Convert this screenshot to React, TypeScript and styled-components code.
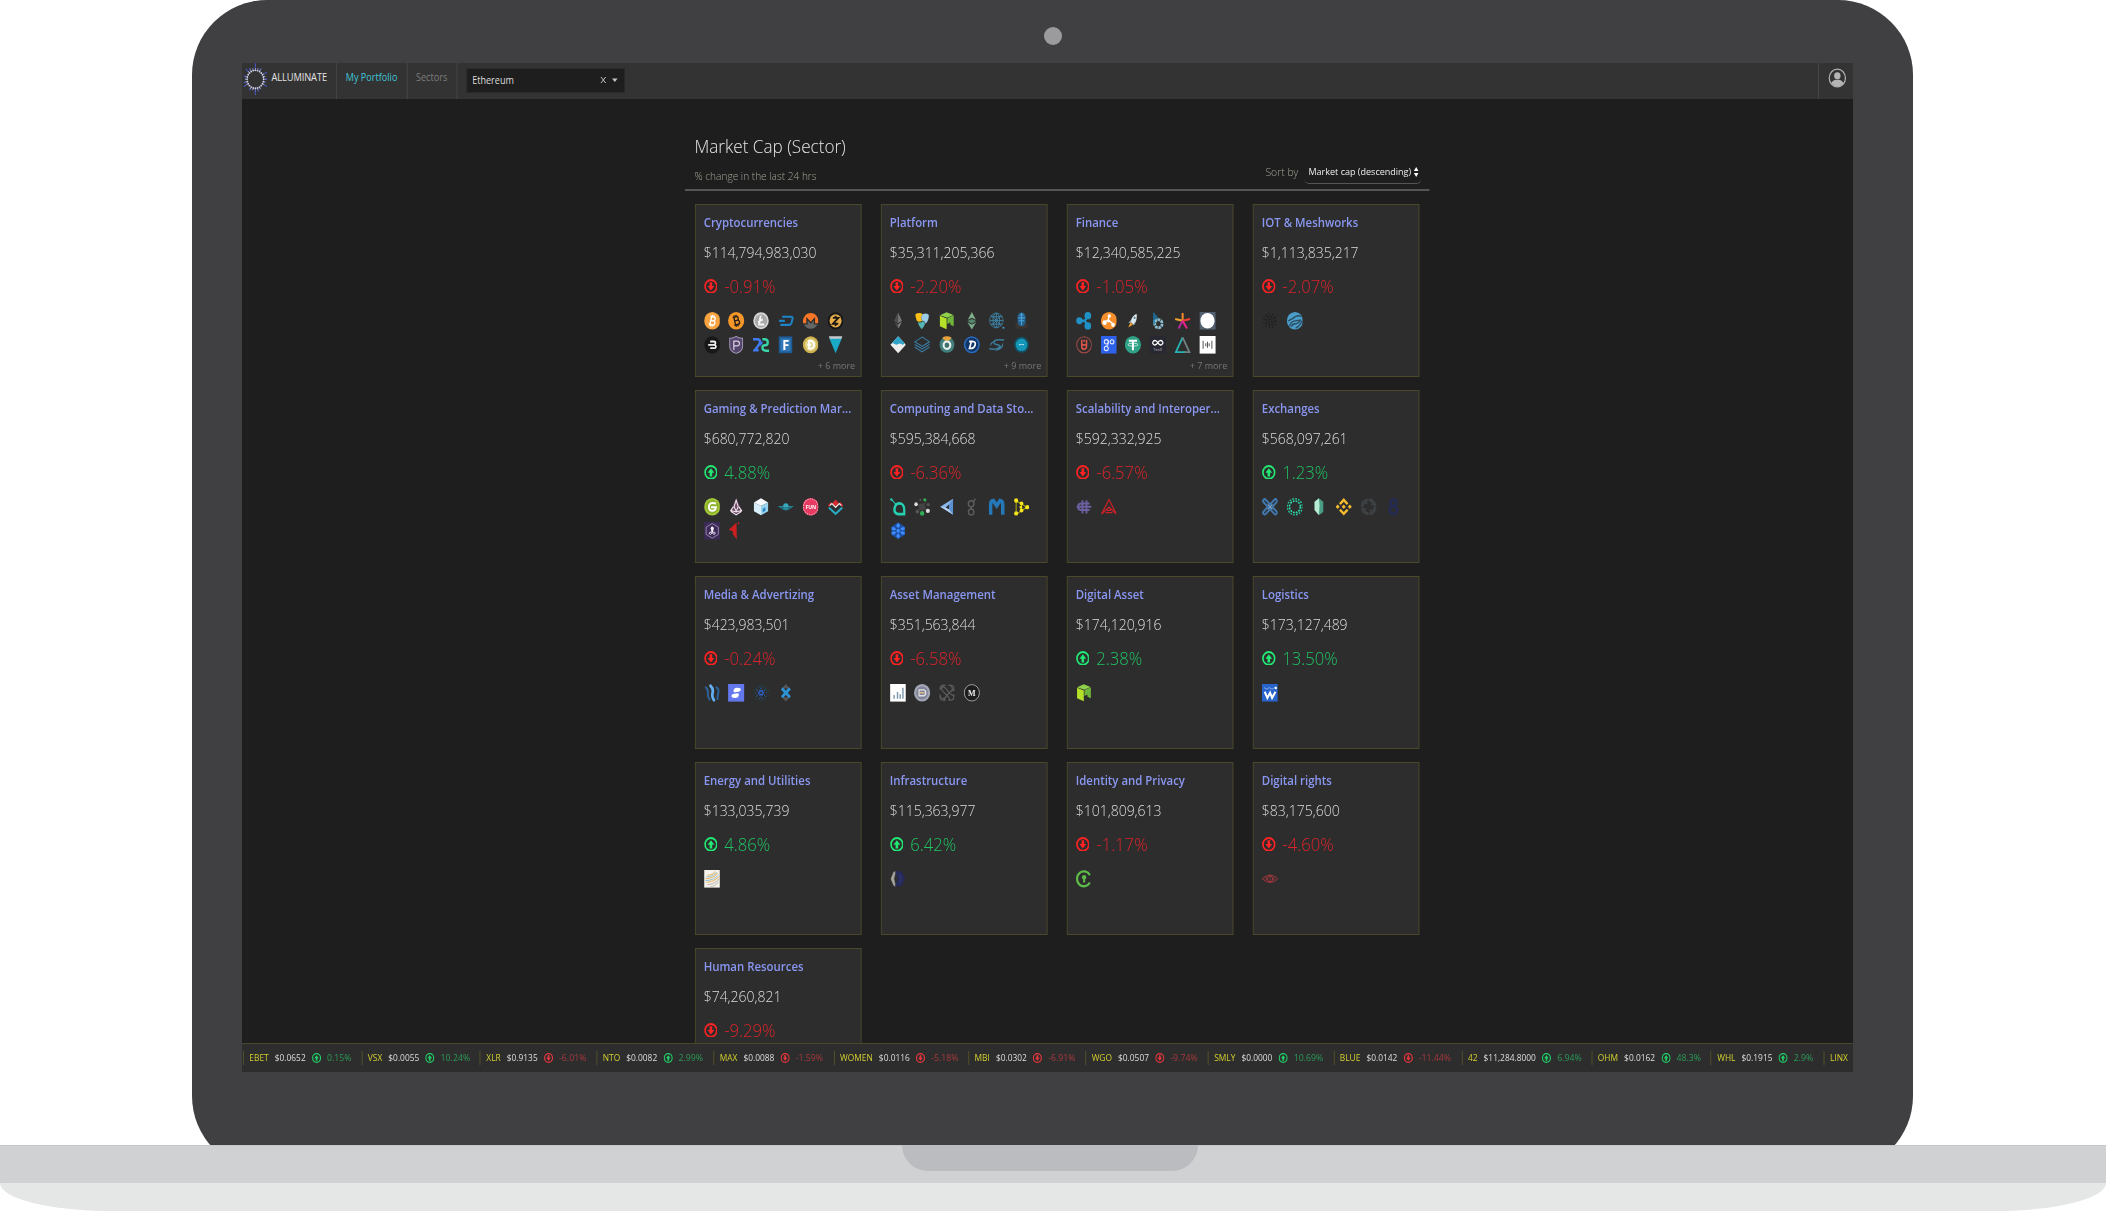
import React from "react";
import styled, { createGlobalStyle } from "styled-components";

const GlobalStyle = createGlobalStyle`
  *, *::before, *::after { box-sizing: border-box; }
  html, body { margin: 0; padding: 0; background: #fff; }
  body { width: 2106px; height: 1211px; overflow: hidden; font-family: "Open Sans", "Noto Sans", sans-serif; }
`;

/* ---------- laptop ---------- */

const Laptop = styled.div`
  width: 2106px;
  height: 1211px;
  display: flex;
  flex-direction: column;
  align-items: center;
  overflow: hidden;
  background: #fff;
`;
const LidClip = styled.div`
  width: 1721px;
  height: 1145px;
  margin-right: 1px;
  overflow: hidden;
  flex: none;
`;
const Lid = styled.div`
  height: 1171px;
  border-radius: 75px;
  background: #404042;
  display: flex;
  flex-direction: column;
  align-items: flex-start;
  padding-left: 50px;
`;
const CameraBar = styled.div`
  height: 63px;
  width: 1622px;
  padding-top: 26.5px;
  display: flex;
  justify-content: center;
`;
const Camera = styled.div`
  width: 18px;
  height: 18px;
  border-radius: 50%;
  background: #9b9b9d;
`;
const Base = styled.div`
  width: 100%;
  height: 38px;
  flex: none;
  background: #d0d1d3;
  border-top: 1px solid #c6c7c9;
  display: flex;
  justify-content: center;
`;
const Notch = styled.div`
  width: 296px;
  height: 26px;
  margin-left: -6px;
  margin-top: -1px;
  border-radius: 0 0 26px 26px;
  background: #bbbcbf;
`;
const Foot = styled.div`
  width: 100%;
  height: 28px;
  flex: none;
  background: #e5e7e6;
  border-radius: 0 0 110px 110px / 0 0 28px 28px;
`;

/* The app is laid out 1750px wide and narrowed to the width of the display. */
const Display = styled.div`
  width: 1611px;
  height: 1009px;
  overflow: hidden;
  background: #1e1e1e;
`;
const Page = styled.div`
  width: 1750px;
  height: 1009px;
  transform: scaleX(0.92057);
  transform-origin: 0 0;
  display: flex;
  flex-direction: column;
  overflow: hidden;
`;

/* ---------- navigation ---------- */

const Nav = styled.nav`
  height: 36px;
  flex: none;
  background: #333;
  display: flex;
  align-items: stretch;
`;
const Brand = styled.div`
  width: 102px;
  padding-left: 0.5px;
  display: flex;
  align-items: flex-start;
`;
const BrandName = styled.span`
  font-size: 10.1px;
  line-height: 28px;
  letter-spacing: -0.1px;
  color: #e4e4e4;
  margin-left: 4.5px;
`;
const NavItem = styled.a<{ $w: number; $active?: boolean }>`
  width: ${(p) => p.$w}px;
  border-left: 1px solid #474747;
  text-align: center;
  font-size: 9.9px;
  line-height: 28px;
  color: ${(p) => (p.$active ? "#3fc6d8" : "#7d7d7d")};
`;
const SearchCell = styled.div`
  border-left: 1px solid #474747;
  padding: 5px 0 0 10px;
  flex: 1;
`;
const SearchBox = styled.div`
  width: 172px;
  height: 24.5px;
  background: #1e1e1e;
  border: 1px solid #2a2a2a;
  display: flex;
  align-items: flex-start;
  padding: 0.5px 5px 0 5.5px;
  color: #dcdcdc;
  font-size: 9.9px;
`;
const SearchValue = styled.span`
  flex: 1;
  line-height: 20px;
`;
const SearchIcons = styled.svg`
  width: 22px;
  height: 10px;
  margin-top: 5.5px;
`;
const Profile = styled.div`
  width: 38px;
  border-left: 1px solid #474747;
  display: flex;
  padding: 4.5px 0 0 10px;
`;

/* ---------- heading ---------- */

const Content = styled.main`
  height: 944px;
  flex: none;
  overflow: hidden;
  display: flex;
  flex-direction: column;
  padding-left: 481px;
`;
const Heading = styled.header`
  width: 809px;
  height: 92px;
  flex: none;
  border-bottom: 2px solid #555;
  padding: 0 9.5px 0 10.5px;
  display: flex;
  justify-content: space-between;
`;
const Titles = styled.div`
  display: flex;
  flex-direction: column;
`;
const Title = styled.h1`
  margin: 33px 0 0;
  font-size: 18.6px;
  line-height: 28px;
  font-weight: 300;
  color: #e6e6e6;
`;
const Subtitle = styled.span`
  margin-top: 6px;
  font-size: 11px;
  line-height: 20px;
  font-weight: 300;
  color: #a3a396;
`;
const Sort = styled.div`
  display: flex;
  margin-top: 62px;
  height: 24px;
`;
const SortLabel = styled.span`
  font-size: 11.3px;
  line-height: 22px;
  font-weight: 300;
  color: #a3a396;
  margin-right: 6px;
`;
const SortSelect = styled.span`
  width: 127px;
  height: 23px;
  border-bottom: 1.5px solid #555;
  border-radius: 5px;
  font-size: 9.8px;
  line-height: 21px;
  color: #ececec;
  padding-left: 5px;
  display: flex;
  align-items: flex-start;
  white-space: nowrap;
`;
const SortArrows = styled.svg`
  width: 5px;
  height: 10px;
  margin: 5.5px 0 0 2.5px;
`;

/* ---------- cards ---------- */

const Grid = styled.section`
  margin: 13.3px 0 0 10.5px;
  display: grid;
  grid-template-columns: repeat(4, 181.6px);
  grid-auto-rows: 172.4px;
  column-gap: 20.5px;
  row-gap: 13.6px;
`;
const Card = styled.article`
  background: #2d2d2d;
  border: 1px solid #4a4828;
  padding: 7.8px 6px 0 9px;
  display: flex;
  flex-direction: column;
  overflow: hidden;
`;
const Sector = styled.h2`
  margin: 0;
  font-size: 12.4px;
  line-height: 20px;
  font-weight: 600;
  color: #8a97f2;
  white-space: nowrap;
`;
const Amount = styled.div`
  margin-top: 9.4px;
  font-size: 15.2px;
  line-height: 20px;
  font-weight: 300;
  color: #dcdcdc;
`;
const Change = styled.div<{ $up: boolean }>`
  margin-top: 11.6px;
  height: 24px;
  display: flex;
  align-items: center;
  gap: 7.5px;
  font-size: 18.1px;
  line-height: 24px;
  font-weight: 300;
  color: ${(p) => (p.$up ? "#20c163" : "#dc242b")};
`;
const Coins = styled.div`
  margin-top: 14px;
  height: 42px;
  flex: none;
  display: grid;
  grid-template-columns: repeat(6, 17.6px);
  grid-auto-rows: 17.6px;
  column-gap: 9.25px;
  row-gap: 6.4px;
`;
const CoinSvg = styled.svg`
  width: 17.6px;
  height: 17.6px;
  display: block;
`;
const More = styled.span`
  align-self: flex-end;
  margin: 5.3px 0 0;
  font-size: 9.8px;
  line-height: 14px;
  font-weight: 400;
  color: #777;
`;

/* ---------- ticker ---------- */

const Ticker = styled.footer`
  height: 29px;
  flex: none;
  background: #2d2d2d;
  border-top: 1px solid #4a4828;
  display: flex;
  padding: 6.5px 0 0 1px;
  overflow: hidden;
`;
const Quote = styled.div<{ $w: number }>`
  width: ${(p) => p.$w}px;
  flex: none;
  height: 14px;
  border-left: 1px solid #55532a;
  padding-left: 6px;
  display: flex;
  align-items: center;
  gap: 6.6px;
  font-size: 9.1px;
  line-height: 14px;
  white-space: nowrap;
`;
const Symbol = styled.span`
  color: #d3cf2f;
`;
const Price = styled.span`
  color: #dedede;
`;
const Percent = styled.span<{ $up: boolean }>`
  font-size: 9.5px;
  color: ${(p) => (p.$up ? "#2c9b58" : "#a8393e")};
`;

const ArrowSvg = styled.svg<{ $size: number }>`
  width: ${(p) => p.$size}px;
  height: ${(p) => p.$size}px;
  flex: none;
`;

function Arrow({ up, size, small }: { up: boolean; size: number; small?: boolean }) {
  const c = up ? (small ? "#20d068" : "#22e874") : small ? "#e8363c" : "#ff2222";
  return (
    <ArrowSvg $size={size} viewBox="0 0 16 16">
      <circle cx="8" cy="8" r="6.9" fill="none" stroke={c} strokeWidth="2" />
      <path
        d="M6.500 3.600h3v4.100h2.500L8 12.400 4 7.700h2.500z"
        fill={c}
        transform={up ? "rotate(180 8 8)" : undefined}
      />
    </ArrowSvg>
  );
}

/* ---------- coin logos, 24 x 24 each ---------- */

const dots = (n: number, r: number, size: number, fill: string, off = 0) =>
  Array.from({ length: n }, (_, i) => {
    const a = ((i + off) / n) * Math.PI * 2;
    return <circle key={`${r}-${i}`} cx={12 + r * Math.cos(a)} cy={12 + r * Math.sin(a)} r={size} fill={fill} />;
  });

const glyph = (t: string, fill: string, size = 15, family = "Open Sans", extra: object = {}) => (
  <text x="12" y={12 + size * 0.36} textAnchor="middle" fontFamily={family} fontWeight="700" fontSize={size} fill={fill} {...extra}>
    {t}
  </text>
);

const bShape = (c: string, rot: number) => (
  <g transform={`rotate(${rot} 12 12)`} fill="none" stroke={c} strokeWidth="2">
    <path d="M8 6.500h5.200a2.600 2.600 0 0 1 0 5.200H9.500M13.200 11.700h.6a2.800 2.800 0 0 1 0 5.600H8M9.800 6.500v10.800M10.500 4v3M13.300 4v3M10.500 17v3M13.300 17v3" />
  </g>
);

const neo = (
  <>
    <path d="M1.500 4.500 11.500.5l10 3.500-9 4z" fill="#8fd14a" />
    <path d="M1.500 5 11.500 9v14.500l-10-4z" fill="#b4e02a" />
    <path d="M12.500 8.500 22 4.500v14.800l-5-2v-3l-4.500 2z" fill="#6fb53a" />
  </>
);

const coins: Record<string, React.ReactNode> = {
  btc: (<><circle cx="12" cy="12" r="12" fill="#f9a340" />{bShape("#fff", 13)}</>),
  bcc: (<><circle cx="12" cy="12" r="12" fill="#f7972a" />{bShape("#2a2218", -13)}</>),
  ltc: (<><circle cx="12" cy="12" r="11.500" fill="#d4d4d4" /><circle cx="12" cy="12" r="9" fill="#a8a8a8" /><path d="M11.500 5 9 17h8M7.500 14l7-4" fill="none" stroke="#f5f5f5" strokeWidth="2.600" /></>),
  dash: (<path d="M6.500 6.500H20q2.500 0 1.800 2.800l-1.500 5.700q-.8 2.500-3.300 2.500H3.800M2 12h8.500" fill="none" stroke="#1d84c9" strokeWidth="3" />),
  xmr: (<><path d="M.8 15.500a11.500 11.500 0 1 1 22.400 0h-4.700V6.800L12 13.300 5.500 6.800v8.700z" fill="#fa7627" /><path d="M2 17h5.500v-5.500L12 16l4.500-4.500V17H22a11.500 11.500 0 0 1-20 0z" fill="#666" /></>),
  zec: (<><circle cx="12" cy="12" r="11.800" fill="#171717" /><circle cx="12" cy="12" r="9" fill="#e5ad48" /><path d="M8 8h8l-8 8h8M12 5v3M12 16v3" fill="none" stroke="#1a1712" strokeWidth="2.600" /></>),
  bcn: (<><circle cx="12" cy="12" r="11.800" fill="#181818" /><path d="M9 7.500h5.500q2.500 0 2.500 2.200T14.500 12H6M14.500 12q3 0 3 2.400t-3 2.300H9" fill="none" stroke="#f0f0f0" strokeWidth="2.400" /></>),
  pivx: (<><path d="M2.500 3q5 .5 9.500-2.500Q16.500 3.500 21.500 3v12q0 6-9.500 8.700Q2.500 21 2.500 15z" fill="#54456b" stroke="#a496b8" strokeWidth="1.400" /><path d="M8.500 19V7h5.200a3.200 3.200 0 0 1 0 6.400H8.500" fill="none" stroke="#d9d0e6" strokeWidth="1.800" /></>),
  dcr: (<><path d="M0 4.500h6q5 0 4.500 4.200Q9.500 12 2.500 19.500h6" fill="none" stroke="#3f7bf2" strokeWidth="3.600" /><path d="M24 20h-4.500q-5.500-.5-5.500-4t4-3.500q4 0 4-3.800t-4-4.200h-4" fill="none" stroke="#3ad6ab" strokeWidth="3.400" /><path d="m14 8-4 5" stroke="#3f7bf2" strokeWidth="2.500" /></>),
  fct: (<><rect x="1.500" y=".5" width="20" height="23" fill="#1e5a94" /><rect x="4" y="3" width="15" height="18" fill="#2f78b8" />{glyph("F", "#fff", 19)}</>),
  doge: (<><circle cx="12" cy="12" r="11.700" fill="#cdb14e" /><circle cx="12" cy="12" r="8.500" fill="#e4d58d" /><path d="M9.500 6.800h3q4.500.6 4.500 5.200t-4.500 5.200h-3zM7 12h6" fill="none" stroke="#fff" strokeWidth="2.600" /></>),
  xvg: (<><path d="M2 .5h20l-1.500 4h-17z" fill="#c6c9cc" /><path d="M3 3.800h18L12 23.500z" fill="#1ba9c8" /></>),
  eth: (<><path d="m12 1 5.500 11-5.500 3.200L6.500 12z" fill="#777" /><path d="M12 1v14.200L6.500 12zM6.500 13.800 12 23v-6z" fill="#4c4c4c" /><path d="m12 17 5.500-3.200L12 23z" fill="#8a8a8a" /></>),
  nem: (<><path d="M2 3q6-3 11 0-4 4-1 9-5 3-8-.5Q2 7 2 3z" fill="#fbbf18" /><path d="M13 3q5-2 9 1 0 8-5 12-1-5-5-4-3-5 1-9z" fill="#9ccbe8" /><path d="M5.500 14q6 1 7-1.500 4-.5 3.500 4.500-2 4-4.500 6.500-4-3.500-6-9.500z" fill="#55b7b3" /></>),
  neo,
  etc: (<><path d="M12 0 18 10.500 12 8 6 10.500z" fill="#7fae8a" /><path d="m12 9.500 6.500 2.700L12 16l-6.500-3.800z" fill="#55856a" /><path d="M5.500 14 12 17.500 18.500 14 12 24z" fill="#7fae8a" /></>),
  qtum: (<><g fill="none" stroke="#3f86a8" strokeWidth="1.300"><circle cx="11.500" cy="11.500" r="10" strokeDasharray="3 1" /><ellipse cx="11.500" cy="11.500" rx="5" ry="10" /><path d="M1.500 11.500h20M3 6.500h17M3 16.500h17M11.500 1.500v20M4 4l15 15M19 4 4 19" /></g><circle cx="22" cy="21.500" r="1.500" fill="#4a9cc4" /></>),
  lsk: (<><path d="M4 15h16l2 4-4 4H6l-4-4z" fill="#3c3431" /><path d="M9 1h6l3 4v10l-3 4H9l-3-4V5z" fill="#23608c" /><path d="M9 4h6M7 8h10M8 12h8M12 1v17" stroke="#4ea3d8" strokeWidth="1.500" /></>),
  strat2: (<><path d="M12 .5 23.500 12 12 23.500.5 12z" fill="#ededed" /><path d="M12 .5 21.500 10q-2.500 3-5 1-2-1.500-4.500 0-2.500 2-5 0-2-1.500-4.500-1z" fill="#2ea3c8" /></>),
  strat: (<g fill="none" stroke="#3a769c" strokeWidth="1.600"><path d="M12 1.500 23 8l-11 6L1 8z" /><path d="m1 11.500 11 6 11-6M1 15l11 6.500L23 15" /></g>),
  kmd: (<><circle cx="12" cy="12" r="11" fill="#437f7c" /><path d="M5 2.500q7-4 14 0l-4 4H9z" fill="#e9a13a" /><circle cx="12" cy="12.500" r="5" fill="#41706b" stroke="#e9f2ef" strokeWidth="3" /></>),
  dgb: (<><circle cx="12" cy="12" r="11.700" fill="#2a6dc0" /><circle cx="12" cy="12" r="9.500" fill="#0e3468" /><path d="M8 7.500h6q4 .5 3 4.500t-5 5H8.500l2.500-8" fill="none" stroke="#fff" strokeWidth="2.400" /></>),
  sys: (<g fill="none" stroke="#3c7c9c" strokeWidth="2"><path d="M23 5.500Q8 4 8 8.500q0 3 6 3.500 4 1 1 4-4 3-14 1.500" /><path d="M21 10q1 8-11 9.500M3 13q0-4 7-6M19 13q-2 4-7 4.500" strokeWidth="1.500" /></g>),
  teal: (<><circle cx="12" cy="12" r="11" fill="#145064" /><circle cx="12" cy="12" r="8.500" fill="#1496b8" />{glyph("••••", "#dff4fa", 5)}</>),
  xrp: (<><g fill="#1f91c4"><circle cx="17.500" cy="5" r="5" /><circle cx="17.500" cy="19" r="5" /><circle cx="5" cy="12" r="4.700" /></g><path d="M17 5q-1 6-6 7 5 1 6 7M5 12h7" fill="none" stroke="#1f91c4" strokeWidth="3.200" /></>),
  bts2: (<><circle cx="12" cy="12" r="12" fill="#f78f2c" /><path d="m12 4-1 7-6 3M11 11l8 6" stroke="#fff" strokeWidth="2" fill="none" /><g fill="#fff"><circle cx="12.500" cy="5.500" r="2.500" /><circle cx="5.500" cy="14.500" r="3.200" /><circle cx="18" cy="17.500" r="2.800" /><circle cx="11" cy="12" r="2.200" /></g></>),
  xlm: (<><path d="M17.500 2.500q-7 2.500-9 11l4.500 4q6-5.500 4.500-15z" fill="#dce9ee" /><path d="M10 10 5 15l4-.5zM14 14l-1 5 3-5z" fill="#8fa7b2" /><path d="m8.500 14-3.500 7 7-3.500z" fill="#efa32f" /><circle cx="14.500" cy="8" r="1.500" fill="#4f7485" /></>),
  bts: (<><path d="M5 0q7 5 8 11-3 0-4.500 3.500L5 12z" fill="#20678c" /><circle cx="13" cy="16" r="5.500" fill="none" stroke="#8cbccd" strokeWidth="4" strokeDasharray="3.800 1" /><path d="M6.500 11v6" stroke="#3a8fb5" strokeWidth="2.500" /></>),
  star: (<g strokeWidth="3" fill="none"><path d="M12 1.500V11" stroke="#f58a2a" /><path d="M1 9.500 12 12" stroke="#f5a52d" /><path d="m23 9.500-11 2.500" stroke="#ee4136" /><path d="m12 12-6 10.500" stroke="#b22a9a" /><path d="m12 12 6.500 10.500" stroke="#e8238a" /></g>),
  slate: (<><rect width="24" height="24" fill="#53606f" /><circle cx="12" cy="12" r="10.500" fill="#fff" /></>),
  ubq: (<><circle cx="12" cy="12" r="11" fill="none" stroke="#a04a45" strokeWidth="1.500" /><path d="M8.500 5v9.500a3.500 3.500 0 0 0 7 0V5M8.500 12h7M12 5v3" fill="none" stroke="#d8544c" strokeWidth="2.400" /></>),
  omg: (<><rect width="24" height="24" fill="#2f62ea" /><g fill="none" stroke="#e4ebff" strokeWidth="1.500"><circle cx="8" cy="8" r="3" /><circle cx="16.500" cy="8" r="2.800" /><circle cx="8" cy="17" r="3" /><path d="M11 6v4q0 3-3 4" /></g></>),
  usdt: (<><circle cx="12" cy="12" r="12" fill="#2fa285" /><path d="M6 6.500h12M12 6.500v13" stroke="#fff" strokeWidth="3" /><ellipse cx="12" cy="11.800" rx="7.500" ry="2" fill="none" stroke="#fff" strokeWidth="1" /></>),
  pay: (<><rect width="24" height="24" fill="#282833" /><path d="M12 9Q8.500 4.500 5.500 7q-2.500 2.500.5 4.700Q9 13.500 12 9q3.500-4.500 6.500-2 2.500 2.500-.5 4.700Q15 13.500 12 9z" fill="none" stroke="#fff" strokeWidth="1.800" />{glyph("TenX", "#8a8a92", 5, "Open Sans", { y: 20.5 })}</>),
  ardr: (<><path d="M12 2 2 22h15" fill="none" stroke="#27b3b3" strokeWidth="2.600" /><path d="m12 2 10 20h-7" fill="none" stroke="#6f8083" strokeWidth="2.600" /></>),
  bars: (<><rect width="24" height="24" fill="#fff" /><path d="M5.500 6.500v11M9.500 10v4M12 8v8M14.500 10v4M18.500 6.500v11" stroke="#555" strokeWidth="1.500" /></>),
  iota: (<>{dots(11, 9.5, 1.3, "#202020")}{dots(8, 6, 1.5, "#202020", 0.3)}{dots(4, 2.5, 1.3, "#202020", 0.2)}</>),
  sky: (<><circle cx="12" cy="12" r="12" fill="#4a9dc8" /><path d="M2 12Q10 9 12 6.500 17 4 22 6M4 20q1-7 8-8 6-1 8-1-3 5-8 5-5 1-5 4M13 22q7-3 9-10" fill="none" stroke="#2b4d62" strokeWidth="1.800" /></>),
  game: (<><circle cx="12" cy="12" r="12" fill="#a4c639" /><circle cx="12" cy="12" r="9.500" fill="#8fb32b" /><path d="M17.500 7.500Q7 5 7 12q0 5.500 5 5.500 5 0 5.500-5H10" fill="none" stroke="#fff" strokeWidth="2.800" /></>),
  aug: (<><path d="M12 .5 21 18l-9 5.500L3 18z" fill="#6c4a64" /><path d="m12 3 3 9-3 6-3-6zM4 18l8 5 8-5M8 12l-4 5 8 2 8-2-4-5" fill="none" stroke="#efe6ee" strokeWidth="1.500" /></>),
  cube: (<><path d="m12 .5 10.500 5.500L12 11 1.500 6z" fill="#f5fbff" /><path d="M1.500 6 12 11v12.500L1.500 18z" fill="#d8eff9" /><path d="M22.500 6 12 11v12.500L22.500 18z" fill="#9ad4ef" /><path d="m14.500 14.500 4-2v5l-4 2z" fill="#2685c4" /></>),
  wing: (<><path d="M0 11h7q5-3 10 0h7l-6 4q-6 4-12 0z" fill="#258296" /><circle cx="12" cy="11" r="4" fill="#38a8bc" /><path d="M5 13.500h14" stroke="#164854" strokeWidth="1" /></>),
  fun: (<><circle cx="12" cy="12" r="12" fill="#e63a61" /><circle cx="12" cy="12" r="10.800" fill="none" stroke="#f3a3b5" strokeWidth="1.500" strokeDasharray="2 1.500" />{glyph("FUN", "#fff", 7.5)}</>),
  mtl: (<><path d="m12 2 5 5-5 5.500L7 7z" fill="#d52a30" /><path d="m1.500 11 4-4.500M22.500 11l-4-4.500" stroke="#d52a30" strokeWidth="2.500" /><path d="m2 13 10 8.500L22 13" fill="none" stroke="#27a9c2" strokeWidth="3" /><path d="m3.500 10.500 3-3 5.500 5.500 5.500-5.500 3 3" fill="none" stroke="#f0f0f0" strokeWidth="1.600" /></>),
  edg: (<><rect width="24" height="24" fill="#3d2a58" /><path d="m12 2 9 5v10l-9 5-9-5V7z" fill="none" stroke="#9a8cb0" strokeWidth="1.300" /><g fill="#f4f0fa"><circle cx="12" cy="8.500" r="2.300" /><path d="M10 10h4l-1 4h-2z" /></g><path d="M12 14q-5-1-4.500 1.800Q9 18.500 12 15q3 3.500 4.500.8Q17 13 12 14z" fill="none" stroke="#f4f0fa" strokeWidth="1.300" /></>),
  red: (<path d="M12.500 1 1 10.500l6 2v4L13 24zM14.500.5h2V3h-2z" fill="#cc2020" />),
  sc: (<><path d="M8.500 9.500Q12 6 17 8t4 14h-9q-6-1-5.500-7 .5-3.500 2-5.500z" fill="none" stroke="#25d0b0" strokeWidth="3.600" /><path d="m2 2 7 7" stroke="#25d0b0" strokeWidth="1.400" /><circle cx="1.800" cy="2" r="1.700" fill="#25d0b0" /></>),
  gnt2: (<><circle cx="12" cy="12" r="4.800" fill="#444" /><path d="m12 12 6-8M12 12 3 8M12 12l9 5M12 12v9M12 12 4 18" stroke="#444" strokeWidth="1.600" /><g fill="#2fae56"><circle cx="16" cy="2.500" r="2.300" /><circle cx="12" cy="21" r="3.200" /></g><g fill="#ddd"><circle cx="3" cy="8.500" r="2.600" /><circle cx="20.500" cy="17.500" r="3" /></g><g fill="#555"><circle cx="21" cy="9" r="2.300" /><circle cx="5" cy="18.500" r="2.600" /><circle cx="9.500" cy="2.500" r="1.600" /></g></>),
  maid: (<><path d="M21 1 2 12l7 2 6-5 6-2z" fill="#87b5e8" /><path d="M21 1v22l-6-5V9z" fill="#5b8fd0" /><path d="m2 12 19 11-6-7.500-6-3z" fill="#b3d2f5" /></>),
  gnt: (<g fill="none" stroke="#5e5e5e" strokeWidth="2"><circle cx="11" cy="8" r="4.200" /><circle cx="11" cy="19" r="4" /><path d="M11 12v3M14 5l3.500-4" /></g>),
  mgo: (<path d="M3 23V9q0-5 4-5.500l5 7 5-7q4 .5 4 5.500v14" fill="none" stroke="#2478b8" strokeWidth="5.200" />),
  rlc: (<><path d="M4 4l8 4 8 5-8 4-7 5M4 4v17M12 8v9" stroke="#b8ab10" strokeWidth="1.500" fill="none" /><g fill="#f4e51d"><circle cx="4" cy="3.500" r="3" /><circle cx="12" cy="7.500" r="2.800" /><circle cx="20.500" cy="12.500" r="3" /><circle cx="12" cy="17" r="2.800" /><circle cx="4" cy="21" r="3" /><circle cx="11" cy="12.500" r="2" /></g></>),
  storj: (<><path d="m12 .5 10 6v11l-10 6-10-6v-11z" fill="#1d4fa4" /><g fill="#3f8cff"><circle cx="12" cy="12" r="2.600" /><path d="m12 1 3 4-3 3.500L9 5zM12 23l3-4-3-3.500L9 19zM2.500 7h4l2.500 3-3 1.500-3.500-1zM21.500 7h-4L15 10l3 1.500 3.500-1zM2.500 17h4L9 14l-3-1.500-3.500 1zM21.500 17h-4L15 14l3-1.500 3.500 1z" /></g></>),
  hash: (<><path d="M9.500 3v18M15.500 3v18M1 12h22M20 7.500H8q-5 0-5 4.500t5 4.500h12" fill="none" stroke="#6c60a0" strokeWidth="2.800" /></>),
  ark: (<path d="M12 2 23 22 12 12.500 1 22zM9 17h6M7 20h10" fill="none" stroke="#cf2127" strokeWidth="1.700" />),
  xrpx: (<g fill="none" strokeLinecap="round"><path d="m4 4 16 16M20 4 4 20" stroke="#4278ae" strokeWidth="7.500" /><path d="m4 4 16 16M20 4 4 20" stroke="#2a3440" strokeWidth="2" /><path d="m9 9 6 6M15 9l-6 6" stroke="#79a7d2" strokeWidth="1.500" /></g>),
  ring: (<><circle cx="12" cy="12" r="11" fill="none" stroke="#25c497" strokeWidth="2" strokeDasharray="2.600 1.720" /><circle cx="12" cy="12" r="8" fill="none" stroke="#2fe0ae" strokeWidth="2.200" strokeDasharray="2.600 1.590" /></>),
  knc: (<><path d="M12 .5 18.500 5v14L12 23.500z" fill="#4a9d84" /><path d="M12 .5 5.500 5v11.500L12 23.500l1-13z" fill="#b9ecd4" /></>),
  bnb: (<g fill="#f3ba2f"><path d="m12 9 3 3-3 3-3-3zM12 0l7 7-2.500 2.500L12 5 7.500 9.500 5 7zM12 24l-7-7 2.500-2.500L12 19l4.500-4.500L19 17zM3 9l3 3-3 3-3-3zM21 9l3 3-3 3-3-3z" /></g>),
  zrx: (<><circle cx="12" cy="12" r="9.500" fill="none" stroke="#3d4144" strokeWidth="4.500" strokeDasharray="13.400 1.500" /><path d="m5 5 5 3M19 5l-3 5M19 19l-5-3M5 19l3-5" stroke="#3d4144" strokeWidth="2.500" /></>),
  navy: (<g fill="none" stroke="#242a50" strokeWidth="4"><circle cx="12" cy="6.500" r="4.500" /><circle cx="12" cy="16.500" r="5.500" /></g>),
  steem: (<g fill="none" strokeWidth="3" strokeLinecap="round"><path d="M2.500 4.500q4 3 3 7.500t2.500 9" stroke="#2c6298" /><path d="M9.500 2.500q4.500 4 3 9.500t2 10" stroke="#62b0f2" strokeWidth="4" /><path d="M18.500 4.500q4 3 2.500 7.500t-1 8.500" stroke="#2c6298" /></g>),
  snt: (<><rect width="24" height="24" fill="#6478ee" /><path d="M12 11q-4 1-4-1.500 1-5 6-4.500 5 0 5 3-1 3-7 3zM12 13q4-1 4 1.500-1 5-6 4.500-5 0-5-3 1-3 7-3z" fill="#fff" /></>),
  ada: (<>{dots(6, 3, 1.5, "#2b62c8")}{dots(6, 6, 1.1, "#2253a8", 0.5)}{dots(10, 8.5, 0.9, "#1f6484")}{dots(10, 11, 0.7, "#1e5464", 0.5)}</>),
  bat: (<><path d="m12 0 6 6H6zM12 24l6-6H6z" fill="#555" /><path d="m6 6 12 12M18 6 6 18" stroke="#2e93d6" strokeWidth="4" /></>),
  chart: (<><rect width="24" height="24" fill="#fff" /><path d="M6 20v-5M11 20v-9M15 20v-6M19 20V5" stroke="#7d9ab2" strokeWidth="2.200" /></>),
  dgd: (<><circle cx="12" cy="12" r="12" fill="#a4a8b6" /><circle cx="12" cy="12" r="9" fill="#82849a" /><path d="M7.500 8h7q3 .5 3 4t-3 4h-7z" fill="none" stroke="#dfe2ea" strokeWidth="1.800" /><path d="M8 12h8" stroke="#d5bc84" strokeWidth="2" /></>),
  knot: (<g fill="none" stroke="#5c5c5c" strokeWidth="1.700"><path d="M1 8q5-8 11 0t11 8M8 1q-8 5 0 11t8 11M16 1q8 5 0 11T8 23M1 16q5 8 11 0t11-8" /><path d="M2 6q0-4 4-4h4M14 2h4q4 0 4 4v4M22 14v4q0 4-4 4h-4M10 22H6q-4 0-4-4v-4" /></g>),
  mco: (<><circle cx="12" cy="12" r="11.200" fill="#1d1d1d" stroke="#a8a8a8" strokeWidth="1.300" />{glyph("M", "#eee", 12, "Liberation Serif")}</>),
  wtc: (<><rect width="24" height="24" fill="#2864cc" /><path d="M4 10.500 8 19l4-7 3 7 5-8.500" fill="none" stroke="#fff" strokeWidth="3" /><path d="m3 5 4 2 4-2 4 2 6-3" fill="none" stroke="#a9c5f2" strokeWidth="1" /><circle cx="20.500" cy="5.500" r="1.700" fill="#fff" /></>),
  powr: (<><rect width="24" height="24" fill="#f5f3ec" /><path d="M5 7Q13 7 16 2M2 12Q14 12 20 4M3 17q12-1 19-8" fill="none" stroke="#e9bb70" strokeWidth="1.500" /><path d="M3 9.500Q13 9.500 18.500 3M2 14.500q12 0 19.500-8" fill="none" stroke="#7fb4d2" strokeWidth="1.200" /><path d="M5 20q11-1 17-8M9 23q8-1 12-7" fill="none" stroke="#c6c2bb" strokeWidth="1.500" /></>),
  link: (<><path d="M8 2 5.500 3 1.500 12l4 9L8 22 5.500 12z" fill="#a6a39e" stroke="#a6a39e" strokeWidth="1" /><path d="M9 3h7l5 9-5 9H9l4-9z" fill="#262b5c" stroke="#262b5c" strokeWidth="2.500" /><path d="m13.500 6 3 6-3 6" fill="none" stroke="#3a3f70" strokeWidth="1.200" /></>),
  cvc: (<><path d="M20.500 17a10.200 10.200 0 1 1 0-10" fill="none" stroke="#5dbb48" strokeWidth="3.200" /><circle cx="12" cy="10" r="3.200" fill="#5dbb48" /><path d="M12 10v7" stroke="#5dbb48" strokeWidth="3" /></>),
  eye: (<g fill="none" stroke="#a8383e" strokeWidth="1.300"><path d="M.5 12Q12 2 23.500 12 12 22 .5 12z" /><circle cx="12" cy="12" r="4" /><path d="M12 6v12M4 10l4 2-4 2M20 10l-4 2 4 2" strokeWidth="1" /></g>),
};

function Coin({ id }: { id: string }) {
  return <CoinSvg viewBox="0 0 24 24">{coins[id]}</CoinSvg>;
}

/* ---------- data ---------- */

type SectorData = { name: string; cap: string; change: string; coins: string[]; more?: number };

const sectors: SectorData[] = [
  { name: "Cryptocurrencies", cap: "$114,794,983,030", change: "-0.91%", coins: ["btc", "bcc", "ltc", "dash", "xmr", "zec", "bcn", "pivx", "dcr", "fct", "doge", "xvg"], more: 6 },
  { name: "Platform", cap: "$35,311,205,366", change: "-2.20%", coins: ["eth", "nem", "neo", "etc", "qtum", "lsk", "strat2", "strat", "kmd", "dgb", "sys", "teal"], more: 9 },
  { name: "Finance", cap: "$12,340,585,225", change: "-1.05%", coins: ["xrp", "bts2", "xlm", "bts", "star", "slate", "ubq", "omg", "usdt", "pay", "ardr", "bars"], more: 7 },
  { name: "IOT & Meshworks", cap: "$1,113,835,217", change: "-2.07%", coins: ["iota", "sky"] },
  { name: "Gaming & Prediction Mar...", cap: "$680,772,820", change: "4.88%", coins: ["game", "aug", "cube", "wing", "fun", "mtl", "edg", "red"] },
  { name: "Computing and Data Sto...", cap: "$595,384,668", change: "-6.36%", coins: ["sc", "gnt2", "maid", "gnt", "mgo", "rlc", "storj"] },
  { name: "Scalability and Interoper...", cap: "$592,332,925", change: "-6.57%", coins: ["hash", "ark"] },
  { name: "Exchanges", cap: "$568,097,261", change: "1.23%", coins: ["xrpx", "ring", "knc", "bnb", "zrx", "navy"] },
  { name: "Media & Advertizing", cap: "$423,983,501", change: "-0.24%", coins: ["steem", "snt", "ada", "bat"] },
  { name: "Asset Management", cap: "$351,563,844", change: "-6.58%", coins: ["chart", "dgd", "knot", "mco"] },
  { name: "Digital Asset", cap: "$174,120,916", change: "2.38%", coins: ["neo"] },
  { name: "Logistics", cap: "$173,127,489", change: "13.50%", coins: ["wtc"] },
  { name: "Energy and Utilities", cap: "$133,035,739", change: "4.86%", coins: ["powr"] },
  { name: "Infrastructure", cap: "$115,363,977", change: "6.42%", coins: ["link"] },
  { name: "Identity and Privacy", cap: "$101,809,613", change: "-1.17%", coins: ["cvc"] },
  { name: "Digital rights", cap: "$83,175,600", change: "-4.60%", coins: ["eye"] },
  { name: "Human Resources", cap: "$74,260,821", change: "-9.29%", coins: [] },
];

const quotes: [string, string, string, number][] = [
  ["EBET", "$0.0652", "0.15%", 128.7],
  ["VSX", "$0.0055", "10.24%", 128.7],
  ["XLR", "$0.9135", "-6.01%", 126.5],
  ["NTO", "$0.0082", "2.99%", 127.1],
  ["MAX", "$0.0088", "-1.59%", 130.7],
  ["WOMEN", "$0.0116", "-5.18%", 146.1],
  ["MBI", "$0.0302", "-6.91%", 127.2],
  ["WGO", "$0.0507", "-9.74%", 133.2],
  ["SMLY", "$0.0000", "10.69%", 136.4],
  ["BLUE", "$0.0142", "-11.44%", 139.2],
  ["42", "$11,284.8000", "6.94%", 141.1],
  ["OHM", "$0.0162", "48.3%", 129.7],
  ["WHL", "$0.1915", "2.9%", 122.5],
  ["LINX", "", "", 40],
];

const rays = [5, 2, 3, 1, 4, 2, 3, 2, 4, 1, 2, 3, 5, 2, 3, 1, 4, 3, 2, 3, 1, 4, 3, 2];

function Logo() {
  return (
    <svg width="27" height="32" viewBox="0 0 27 32">
      {rays.map((n, i) => {
        const a = (i / rays.length) * Math.PI * 2 - Math.PI / 2;
        return Array.from({ length: n }, (_, k) => (
          <circle
            key={`${i}-${k}`}
            cx={13.5 + (9 + k * 1.6) * Math.cos(a)}
            cy={16.3 + (9 + k * 1.6) * Math.sin(a)}
            r={k === 0 ? 0.95 : 0.75}
            fill={k === 0 ? "#d4d6ee" : k === 1 ? "#8f97e8" : "#4a5cd8"}
          />
        ));
      })}
    </svg>
  );
}

export default function App() {
  return (
    <Laptop>
      <GlobalStyle />
      <LidClip>
        <Lid>
          <CameraBar>
            <Camera />
          </CameraBar>
          <Display>
            <Page>
              <Nav>
                <Brand>
                  <Logo />
                  <BrandName>ALLUMINATE</BrandName>
                </Brand>
                <NavItem $w={76.5} $active>My Portfolio</NavItem>
                <NavItem $w={54}>Sectors</NavItem>
                <SearchCell>
                  <SearchBox>
                    <SearchValue>Ethereum</SearchValue>
                    <SearchIcons viewBox="0 0 22 10">
                      <path d="m2 2 5 6M7 2 2 8" stroke="#c4c4c4" strokeWidth="1" />
                      <path d="M14 3.500h6L17 7z" fill="#c4c4c4" />
                    </SearchIcons>
                  </SearchBox>
                </SearchCell>
                <Profile>
                  <svg width="20" height="20" viewBox="0 0 20 20">
                    <circle cx="10" cy="10" r="8.800" fill="none" stroke="#b4b4b4" strokeWidth="1.300" />
                    <circle cx="10" cy="7.800" r="3.500" fill="#b4b4b4" />
                    <path d="M3.500 15.500q1-3.300 4.500-3.700h4q3.500.4 4.500 3.700-6.500 5.500-13 0z" fill="#b4b4b4" />
                  </svg>
                </Profile>
              </Nav>
              <Content>
                <Heading>
                  <Titles>
                    <Title>Market Cap (Sector)</Title>
                    <Subtitle>% change in the last 24 hrs</Subtitle>
                  </Titles>
                  <Sort>
                    <SortLabel>Sort by</SortLabel>
                    <SortSelect>
                      Market cap (descending)
                      <SortArrows viewBox="0 0 5 10">
                        <path d="M2.500 0 5 4H0zM0 6h5l-2.500 4z" fill="#fff" />
                      </SortArrows>
                    </SortSelect>
                  </Sort>
                </Heading>
                <Grid>
                  {sectors.map((s) => {
                    const up = !s.change.startsWith("-");
                    return (
                      <Card key={s.name}>
                        <Sector>{s.name}</Sector>
                        <Amount>{s.cap}</Amount>
                        <Change $up={up}>
                          <Arrow up={up} size={14.8} />
                          <span>{s.change}</span>
                        </Change>
                        <Coins>
                          {s.coins.map((id) => (
                            <Coin key={id} id={id} />
                          ))}
                        </Coins>
                        {s.more && <More>+ {s.more} more</More>}
                      </Card>
                    );
                  })}
                </Grid>
              </Content>
              <Ticker>
                {quotes.map(([sym, price, pct, w]) => {
                  const up = !pct.startsWith("-");
                  return (
                    <Quote key={sym} $w={w}>
                      <Symbol>{sym}</Symbol>
                      {price && (
                        <>
                          <Price>{price}</Price>
                          <Arrow up={up} size={10} small />
                          <Percent $up={up}>{pct}</Percent>
                        </>
                      )}
                    </Quote>
                  );
                })}
              </Ticker>
            </Page>
          </Display>
        </Lid>
      </LidClip>
      <Base>
        <Notch />
      </Base>
      <Foot />
    </Laptop>
  );
}
